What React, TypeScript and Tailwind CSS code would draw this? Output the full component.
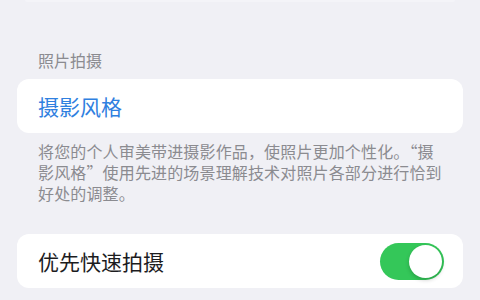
export default function App() {
  return (
    <div className="w-[480px] h-[300px] overflow-hidden bg-[#f0f0f5] px-[17px] font-['Noto_Sans_CJK_SC','Noto_Sans',sans-serif]">
      {/* bottom edge of the card above */}
      <div className="h-[2px] mx-[8px] bg-[#f4f4f8] rounded-b-[10px]" />

      <div className="mt-[47px] pl-[21px] text-[16px] leading-[22px] text-[#8b8b90]">照片拍摄</div>

      <div className="mt-[8px] h-[54px] rounded-[12px] bg-white flex items-center px-[21px]">
        <span className="text-[21px] leading-[28px] text-[#2f80e0]">摄影风格</span>
      </div>

      <p className="mt-[8px] pl-[21px] text-[16px] tracking-[0.15px] leading-[21px] text-[#8b8b90] whitespace-nowrap">
        将您的个人审美带进摄影作品，使照片更加个性化。“摄
        <br />
        影风格”使用先进的场景理解技术对照片各部分进行恰到
        <br />
        好处的调整。
      </p>

      <div className="mt-[30px] h-[54px] rounded-[12px] bg-white flex items-center justify-between pl-[21px] pr-[19px]">
        <span className="text-[21px] leading-[28px] text-[#1c1c1e]">优先快速拍摄</span>
        <div className="w-[64px] h-[37px] rounded-full bg-[#34c759] p-[2px] flex justify-end">
          <div className="w-[33px] h-[33px] rounded-full bg-white shadow-[0_2px_4px_rgba(0,0,0,0.2)]" />
        </div>
      </div>

      <p className="mt-[15px] pl-[21px] text-[16px] leading-[21px] text-[#8b8b90] whitespace-nowrap">
        智能调整图像质量以拍摄更多照片。
      </p>
    </div>
  );
}
